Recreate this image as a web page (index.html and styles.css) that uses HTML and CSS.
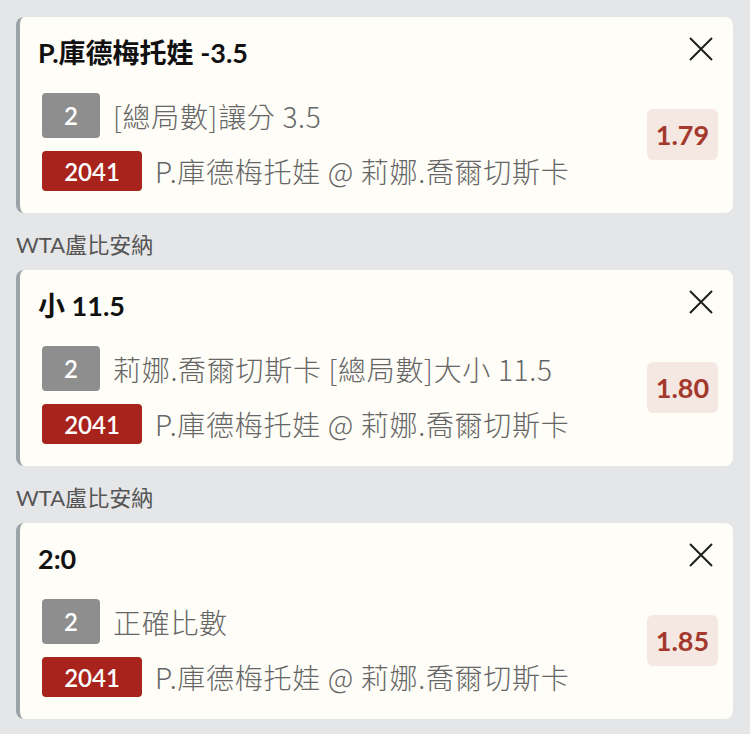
FILE: index.html
```html
<!DOCTYPE html>
<html lang="zh-Hant">
<head>
    <meta charset="UTF-8">
    <meta name="viewport" content="width=device-width, initial-scale=1.0">
    <title>Bet slip</title>
    <link rel="stylesheet" href="styles.css">
</head>
<body>
    <div id="slip">
        <div class="bet-card">
            <div class="card-head">
                <h3 class="bet-title">P.庫德梅托娃 -3.5</h3>
                <button class="btn-close" aria-label="close">
                    <svg width="24" height="24" viewBox="0 0 24 24"><path d="M1 1L23 23M23 1L1 23" stroke="#1e1e1e" stroke-width="2" fill="none"/></svg>
                </button>
            </div>
            <div class="card-body">
                <div class="lines">
                    <div class="line"><span class="tag tag-grey">2</span><span class="line-text">[總局數]讓分 3.5</span></div>
                    <div class="line"><span class="tag tag-red">2041</span><span class="line-text">P.庫德梅托娃 @ 莉娜.喬爾切斯卡</span></div>
                </div>
                <div class="odds">1.79</div>
            </div>
        </div>

        <div class="league">WTA盧比安納</div>
        <div class="bet-card">
            <div class="card-head">
                <h3 class="bet-title">小 11.5</h3>
                <button class="btn-close" aria-label="close">
                    <svg width="24" height="24" viewBox="0 0 24 24"><path d="M1 1L23 23M23 1L1 23" stroke="#1e1e1e" stroke-width="2" fill="none"/></svg>
                </button>
            </div>
            <div class="card-body">
                <div class="lines">
                    <div class="line"><span class="tag tag-grey">2</span><span class="line-text">莉娜.喬爾切斯卡 [總局數]大小 11.5</span></div>
                    <div class="line"><span class="tag tag-red">2041</span><span class="line-text">P.庫德梅托娃 @ 莉娜.喬爾切斯卡</span></div>
                </div>
                <div class="odds">1.80</div>
            </div>
        </div>

        <div class="league">WTA盧比安納</div>
        <div class="bet-card">
            <div class="card-head">
                <h3 class="bet-title">2:0</h3>
                <button class="btn-close" aria-label="close">
                    <svg width="24" height="24" viewBox="0 0 24 24"><path d="M1 1L23 23M23 1L1 23" stroke="#1e1e1e" stroke-width="2" fill="none"/></svg>
                </button>
            </div>
            <div class="card-body">
                <div class="lines">
                    <div class="line"><span class="tag tag-grey">2</span><span class="line-text">正確比數</span></div>
                    <div class="line"><span class="tag tag-red">2041</span><span class="line-text">P.庫德梅托娃 @ 莉娜.喬爾切斯卡</span></div>
                </div>
                <div class="odds">1.85</div>
            </div>
        </div>
    </div>
</body>
</html>
```

FILE: styles.css
```css
body{
    margin: 0;
    background-color: #e5e6e8;
    font-family: Lato, "Noto Sans CJK TC", sans-serif;
}
#slip{
    padding: 17px 17px 0 16px;
}
.bet-card{
    background-color: #fefdf7;
    border-left: 4px solid #9aa3a7;
    border-radius: 8px;
    padding: 18px 15px 22px 22px;
}
.card-head{
    display: flex;
    justify-content: space-between;
    align-items: flex-start;
    height: 36px;
}
.bet-title{
    margin: 0 0 0 -4px;
    font-size: 27px;
    line-height: 36px;
    font-weight: bold;
    color: #111;
}
.btn-close{
    background: none;
    border: none;
    padding: 0;
    margin: 2px 5px 0 0;
    width: 24px;
    height: 24px;
    cursor: pointer;
}
.btn-close svg{
    display: block;
}
.card-body{
    display: flex;
    justify-content: space-between;
    align-items: flex-start;
    margin-top: 22px;
}
.lines{
    display: flex;
    flex-direction: column;
    gap: 13px;
}
.line{
    display: flex;
    align-items: center;
}
.tag{
    display: flex;
    align-items: center;
    justify-content: center;
    color: white;
    font-size: 24px;
    font-weight: 600;
    border-radius: 4px;
}
.tag-grey{
    background-color: #8e8e8e;
    width: 58px;
    height: 45px;
}
.tag-red{
    background-color: #a8231b;
    width: 100px;
    height: 40px;
}
.line-text{
    margin-left: 13px;
    font-family: "Noto Sans CJK TC", sans-serif;
    font-size: 28px;
    font-weight: 300;
    letter-spacing: 0.7px;
    line-height: 36px;
    color: #666;
    white-space: nowrap;
}
.odds{
    margin-top: 16px;
    width: 71px;
    height: 51px;
    display: flex;
    align-items: center;
    justify-content: center;
    background-color: #f5e7e1;
    border-radius: 6px;
    color: #a3392d;
    font-size: 27px;
    font-weight: bold;
}
.league{
    padding: 17px 0 10px 0;
    font-size: 22px;
    line-height: 30px;
    color: #555;
}
```
